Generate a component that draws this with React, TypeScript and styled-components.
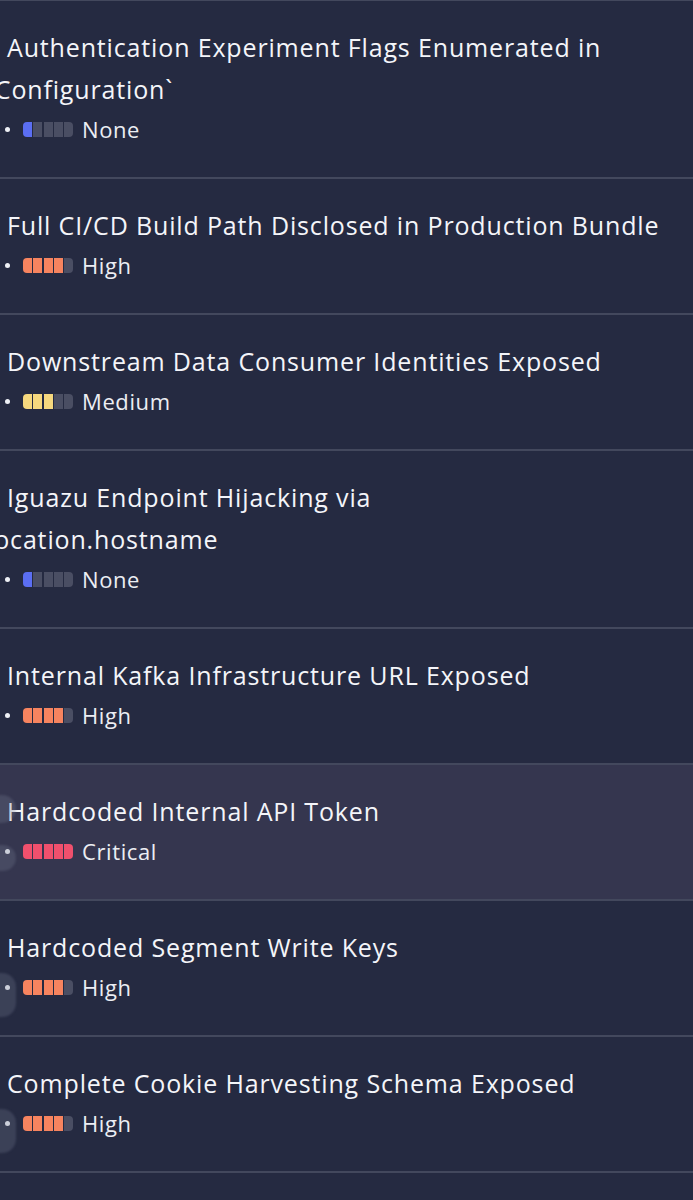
import React from "react";
import styled, { createGlobalStyle } from "styled-components";

type Severity = "none" | "medium" | "high" | "critical"

type Finding = {
  title: string
  severity: Severity
  active?: boolean
  ghost?: "pair" | "single"
}

const levels: Record<Severity, { filled: number; color: string; label: string }> = {
  none: { filled: 1, color: "#5b6ef2", label: "None" },
  medium: { filled: 3, color: "#f6d87e", label: "Medium" },
  high: { filled: 4, color: "#f7845f", label: "High" },
  critical: { filled: 5, color: "#f0506d", label: "Critical" },
}

const findings: Finding[] = [
  { title: "Authentication Experiment Flags Enumerated in\n`Configuration`", severity: "none" },
  { title: "Full CI/CD Build Path Disclosed in Production Bundle", severity: "high" },
  { title: "Downstream Data Consumer Identities Exposed", severity: "medium" },
  { title: "Iguazu Endpoint Hijacking via\nlocation.hostname", severity: "none" },
  { title: "Internal Kafka Infrastructure URL Exposed", severity: "high" },
  { title: "Hardcoded Internal API Token", severity: "critical", active: true, ghost: "pair" },
  { title: "Hardcoded Segment Write Keys", severity: "high", ghost: "single" },
  { title: "Complete Cookie Harvesting Schema Exposed", severity: "high", ghost: "single" },
  { title: "Sensitive Session Storage Keys Exposed", severity: "medium" },
]

const GlobalStyle = createGlobalStyle`
  html, body {
    margin: 0;
    padding: 0;
    background: #252a41;
    overflow: hidden;
  }
  body {
    font-family: "Open Sans", Lato, sans-serif;
    color: #f2f3f7;
  }
`

const List = styled.div`
  width: 693px;
  height: 1200px;
  overflow: hidden;
  border-top: 1px solid #43485d;
  box-sizing: border-box;
`

const Row = styled.div<{ active?: boolean }>`
  position: relative;
  overflow: hidden;
  padding: 25px 0 31px;
  border-bottom: 2px solid #43485d;
  background: ${({ active }) => (active ? "#35364f" : "#252a41")};
`

const Body = styled.div`
  margin-left: -13px;
  padding-right: 10px;
`

const Title = styled.div`
  font-size: 25px;
  line-height: 42px;
  letter-spacing: 0.85px;
  white-space: pre-line;
  text-indent: 20px;
  color: #f4f5f9;
`

const Meta = styled.div`
  display: flex;
  align-items: center;
  height: 34px;
  margin-top: 2px;
  padding-left: 18px;
  gap: 9px;
`

const Dot = styled.span`
  width: 5px;
  height: 5px;
  border-radius: 50%;
  background: #eef0f5;
  margin-right: 4px;
`

const Meter = styled.div`
  display: flex;
  gap: 1.25px;
`

const Segment = styled.span<{ color: string }>`
  width: 9px;
  height: 15px;
  background: ${({ color }) => color};
  &:first-child {
    border-radius: 4px 0 0 4px;
  }
  &:last-child {
    border-radius: 0 4px 4px 0;
  }
`

const Label = styled.span`
  font-size: 22px;
  letter-spacing: 0.6px;
  color: #eceef3;
`

const Ghost = styled.span<{ top: number; h: number }>`
  position: absolute;
  left: -14px;
  top: ${({ top }) => top}px;
  width: 30px;
  height: ${({ h }) => h}px;
  border-radius: 14px;
  background: rgba(120, 124, 148, 0.28);
  filter: blur(1px);
`

function SeverityMeter({ severity }: { severity: Severity }) {
  const { filled, color } = levels[severity]
  return (
    <Meter>
      {[0, 1, 2, 3, 4].map((i) => (
        <Segment key={i} color={i < filled ? color : "#4a4e63"} />
      ))}
    </Meter>
  )
}

export default function App() {
  return (
    <>
      <GlobalStyle />
      <List>
        {findings.map(({ title, severity, active, ghost }) => (
          <Row key={title} active={active}>
            {ghost === "pair" && (
              <>
                <Ghost top={30} h={28} />
                <Ghost top={80} h={26} />
              </>
            )}
            {ghost === "single" && <Ghost top={72} h={44} />}
            <Body>
              <Title>{title}</Title>
              <Meta>
                <Dot />
                <SeverityMeter severity={severity} />
                <Label>{levels[severity].label}</Label>
              </Meta>
            </Body>
          </Row>
        ))}
      </List>
    </>
  )
}
